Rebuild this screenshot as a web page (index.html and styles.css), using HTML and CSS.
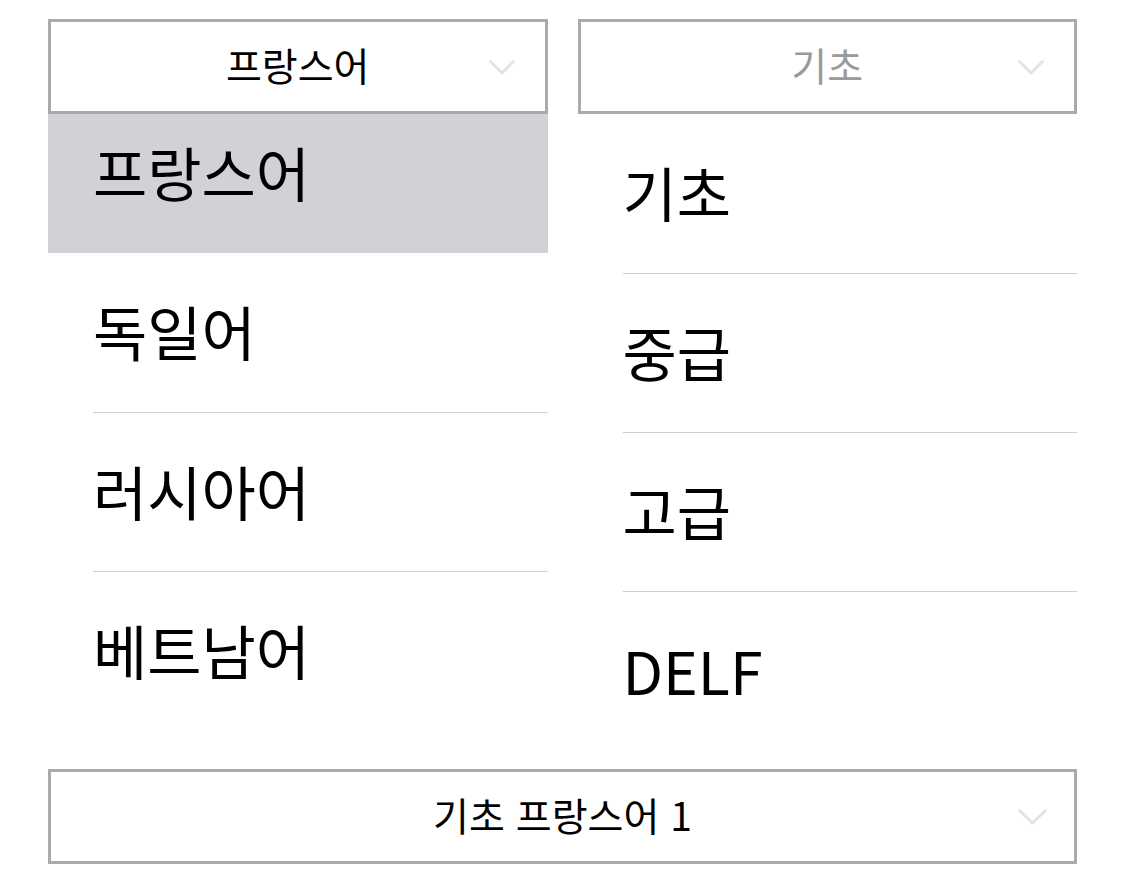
FILE: index.html
```html
<!DOCTYPE html>
<html lang="ko">
<head>
<meta charset="utf-8">
<title>언어 선택</title>
<link rel="stylesheet" href="styles.css">
</head>
<body>
<main class="page">
  <div class="cols">
    <section class="col">
      <div class="select">
        <span class="select-value">프랑스어</span>
        <svg class="chevron" width="28" height="17" viewBox="0 0 28 17"><path d="M2.5 2.5 L14 14 L25.5 2.5" fill="none" stroke="#e3e3e3" stroke-width="3" stroke-linecap="round" stroke-linejoin="round"/></svg>
      </div>
      <div class="list-window">
        <ul class="list list-scrolled">
          <li class="item selected">프랑스어</li>
          <li class="item">독일어</li>
          <li class="item">러시아어</li>
          <li class="item">베트남어</li>
        </ul>
      </div>
    </section>
    <section class="col">
      <div class="select">
        <span class="select-value placeholder">기초</span>
        <svg class="chevron" width="28" height="17" viewBox="0 0 28 17"><path d="M2.5 2.5 L14 14 L25.5 2.5" fill="none" stroke="#e3e3e3" stroke-width="3" stroke-linecap="round" stroke-linejoin="round"/></svg>
      </div>
      <div class="list-window">
        <ul class="list">
          <li class="item">기초</li>
          <li class="item">중급</li>
          <li class="item">고급</li>
          <li class="item">DELF</li>
        </ul>
      </div>
    </section>
  </div>
  <div class="select select-wide">
    <span class="select-value">기초 프랑스어 1</span>
    <svg class="chevron" width="31" height="18" viewBox="0 0 31 18"><path d="M2.5 2.5 L15.5 15 L28.5 2.5" fill="none" stroke="#e3e3e3" stroke-width="3" stroke-linecap="round" stroke-linejoin="round"/></svg>
  </div>
</main>
</body>
</html>
```

FILE: styles.css
```css
* {
  box-sizing: border-box;
}

html, body {
  margin: 0;
  padding: 0;
  background: #ffffff;
}

body {
  font-family: "Noto Sans CJK KR", "Noto Sans", sans-serif;
  color: #000000;
}

.page {
  padding: 19px 48px 0 48px;
  width: 1125px;
}

.cols {
  display: grid;
  grid-template-columns: 1fr 1fr;
  column-gap: 30px;
}

.col {
  display: flex;
  flex-direction: column;
  min-width: 0;
}

.select {
  height: 95px;
  border: 3px solid #aaaaaa;
  background: #ffffff;
  display: grid;
  grid-template-columns: 1fr auto 1fr;
  align-items: center;
  position: relative;
  z-index: 1;
}

.select-value {
  grid-column: 2;
  font-size: 39px;
  line-height: 1;
  color: #000000;
  white-space: nowrap;
  padding-bottom: 4px;
}

.select-value.placeholder {
  color: #9a9a9a;
}

.chevron {
  grid-column: 3;
  justify-self: end;
  margin-right: 29px;
  margin-top: 2px;
}

.select-wide {
  margin-top: 19px;
}

.select-wide .chevron {
  margin-right: 26px;
  margin-top: 0;
}

.list-window {
  overflow: hidden;
}

.list {
  list-style: none;
  margin: 0;
  padding: 0;
}

.list-scrolled {
  margin-top: -20px;
}

.item {
  height: 159px;
  display: flex;
  align-items: center;
  font-size: 59px;
  line-height: 1;
  border-top: 1px solid #cfcfcf;
  margin-left: 45px;
  padding-left: 0;
  padding-bottom: 4px;
}

.item:first-child {
  border-top: none;
}

.item.selected {
  background: #d1d1d7;
  margin-left: 0;
  padding-left: 45px;
}

.item.selected + .item {
  border-top: none;
}
```
